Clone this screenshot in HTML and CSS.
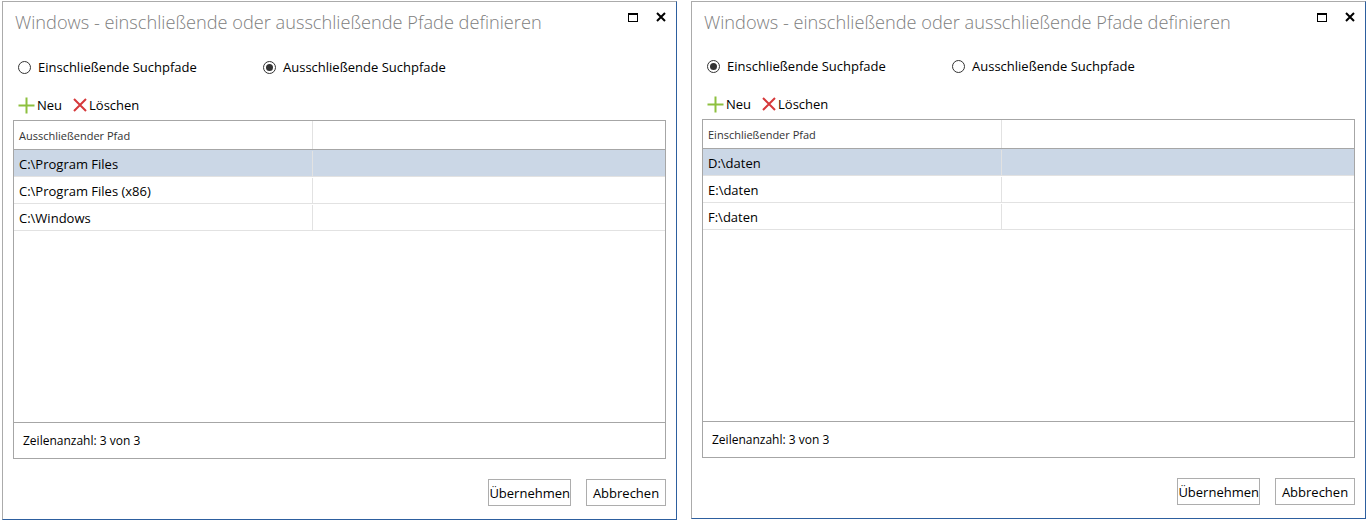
FILE: index.html
```html
<!DOCTYPE html>
<html lang="de">
<head>
    <meta charset="UTF-8">
    <meta name="viewport" content="width=device-width, initial-scale=1.0">
    <title>Suchpfade definieren</title>
    <link rel="stylesheet" href="styles.css">
</head>
<body>
    <!-- Dialog: ausschließende Pfade -->
    <div class="dialog">
        <div class="title-bar">
            <h1>Windows - einschließende oder ausschließende Pfade definieren</h1>
            <div class="window-buttons">
                <span class="win-max"></span>
                <svg class="win-close" width="10" height="10" viewBox="0 0 10 10"><path d="M1 1L9 9M9 1L1 9" stroke="#000" stroke-width="2"/></svg>
            </div>
        </div>

        <div class="radio-row">
            <label class="radio"><span class="radio-circle"></span>Einschließende Suchpfade</label>
            <label class="radio"><span class="radio-circle checked"></span>Ausschließende Suchpfade</label>
        </div>

        <div class="toolbar">
            <span class="tool">
                <svg width="17" height="17" viewBox="0 0 17 17"><path d="M8.5 0.5V16.5M0.5 8.5H16.5" stroke="#8dc03f" stroke-width="2"/></svg>Neu
            </span>
            <span class="tool">
                <svg width="14" height="14" viewBox="0 0 14 14"><path d="M1 1L13 13M13 1L1 13" stroke="#d6393b" stroke-width="2"/></svg>Löschen
            </span>
        </div>

        <div class="grid">
            <div class="grid-head">
                <div class="cell">Ausschließender Pfad</div>
                <div class="cell"></div>
            </div>
            <div class="grid-body">
                <div class="grid-row selected"><div class="cell">C:\Program Files</div><div class="cell"></div></div>
                <div class="grid-row"><div class="cell">C:\Program Files (x86)</div><div class="cell"></div></div>
                <div class="grid-row"><div class="cell">C:\Windows</div><div class="cell"></div></div>
            </div>
            <div class="grid-foot">Zeilenanzahl: 3 von 3</div>
        </div>

        <div class="actions">
            <button class="btn">Übernehmen</button>
            <button class="btn">Abbrechen</button>
        </div>
    </div>

    <!-- Dialog: einschließende Pfade -->
    <div class="dialog dialog-right">
        <div class="title-bar">
            <h1>Windows - einschließende oder ausschließende Pfade definieren</h1>
            <div class="window-buttons">
                <span class="win-max"></span>
                <svg class="win-close" width="10" height="10" viewBox="0 0 10 10"><path d="M1 1L9 9M9 1L1 9" stroke="#000" stroke-width="2"/></svg>
            </div>
        </div>

        <div class="radio-row">
            <label class="radio"><span class="radio-circle checked"></span>Einschließende Suchpfade</label>
            <label class="radio"><span class="radio-circle"></span>Ausschließende Suchpfade</label>
        </div>

        <div class="toolbar">
            <span class="tool">
                <svg width="17" height="17" viewBox="0 0 17 17"><path d="M8.5 0.5V16.5M0.5 8.5H16.5" stroke="#8dc03f" stroke-width="2"/></svg>Neu
            </span>
            <span class="tool">
                <svg width="14" height="14" viewBox="0 0 14 14"><path d="M1 1L13 13M13 1L1 13" stroke="#d6393b" stroke-width="2"/></svg>Löschen
            </span>
        </div>

        <div class="grid">
            <div class="grid-head">
                <div class="cell">Einschließender Pfad</div>
                <div class="cell"></div>
            </div>
            <div class="grid-body">
                <div class="grid-row selected"><div class="cell">D:\daten</div><div class="cell"></div></div>
                <div class="grid-row"><div class="cell">E:\daten</div><div class="cell"></div></div>
                <div class="grid-row"><div class="cell">F:\daten</div><div class="cell"></div></div>
            </div>
            <div class="grid-foot">Zeilenanzahl: 3 von 3</div>
        </div>

        <div class="actions">
            <button class="btn">Übernehmen</button>
            <button class="btn">Abbrechen</button>
        </div>
    </div>
</body>
</html>
```

FILE: styles.css
```css
* {
    margin: 0;
    padding: 0;
    box-sizing: border-box;
}

body {
    font-family: "Open Sans", "Noto Sans", sans-serif;
    font-size: 13px;
    color: #000;
    background: #fff;
    display: flex;
    gap: 14px;
    padding: 1px 0 0 2px;
}

.dialog {
    width: 675px;
    height: 519px;
    border: 1px solid #ababab;
    border-right-color: #2d5f9f;
    border-bottom-color: #2d5f9f;
    padding: 0 10px;
    display: flex;
    flex-direction: column;
}

.dialog-right {
    height: 518px;
}

.title-bar {
    height: 40px;
    display: flex;
    justify-content: space-between;
    align-items: flex-start;
}

.title-bar h1 {
    font-size: 18.2px;
    font-weight: 300;
    color: #808080;
    padding: 7px 0 0 2px;
    line-height: 26px;
    white-space: nowrap;
}

.window-buttons {
    display: flex;
    align-items: center;
    gap: 18px;
    padding: 10px 0 0 0;
}

.win-max {
    width: 10px;
    height: 9px;
    border: 1px solid #000;
    border-top-width: 2px;
}

.dialog-right .title-bar {
    height: 39px;
}

.radio-row {
    display: flex;
    margin-top: 15px;
    height: 20px;
    align-items: center;
    padding-left: 5px;
}

.radio {
    display: flex;
    align-items: center;
    gap: 7px;
    width: 245px;
}

.radio-circle {
    width: 13px;
    height: 13px;
    border: 1px solid #333;
    border-radius: 50%;
    display: flex;
    align-items: center;
    justify-content: center;
}

.radio-circle.checked::after {
    content: "";
    width: 7px;
    height: 7px;
    border-radius: 50%;
    background: #333;
}

.toolbar {
    display: flex;
    gap: 11px;
    margin-top: 19px;
    height: 18px;
    align-items: center;
    padding-left: 5px;
}

.tool {
    display: flex;
    align-items: center;
    gap: 2px;
}

.grid {
    margin-top: 6px;
    height: 339px;
    border: 1px solid #a6a6a6;
    display: flex;
    flex-direction: column;
}

.grid-head {
    display: flex;
    height: 29px;
    border-bottom: 1px solid #a6a6a6;
    font-size: 11px;
    color: #333;
}

.grid-head .cell {
    border-right: 1px solid #a6a6a6;
    padding-left: 6px;
}

.cell {
    display: flex;
    align-items: center;
}

.cell:first-child {
    width: 299px;
    border-right: 1px solid #e2e2e2;
    padding-left: 5px;
}

.cell:last-child {
    flex: 1;
    border-right: none !important;
}

.grid-body {
    flex: 1;
}

.grid-row {
    display: flex;
    height: 27px;
    border-bottom: 1px solid #e2e2e2;
    padding-top: 1px;
}

.grid-row.selected {
    background: #cbd7e6;
}

.grid-foot {
    height: 36px;
    border-top: 1px solid #a6a6a6;
    font-size: 12px;
    display: flex;
    align-items: center;
    padding-left: 9px;
}

.actions {
    display: flex;
    justify-content: flex-end;
    gap: 15px;
    margin-top: 20px;
}

.btn {
    font-family: inherit;
    font-size: 13px;
    height: 27px;
    min-width: 80px;
    padding: 0;
    background: #fff;
    border: 1px solid #adadad;
    color: #000;
}
```
